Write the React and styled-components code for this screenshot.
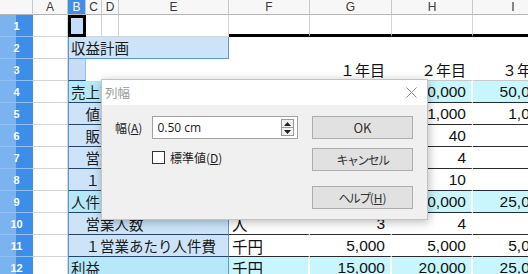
import React from 'react'
import styled, { createGlobalStyle } from 'styled-components'

const GlobalStyle = createGlobalStyle`
  html, body {
    margin: 0;
    padding: 0;
    background: #ffffff;
    overflow: hidden;
  }
`

const JP = `'Noto Sans CJK JP', 'Noto Sans', sans-serif`
const NUM = `'Liberation Sans', 'Noto Sans CJK JP', sans-serif`

const tones = {
  cyan: '#b6e8fa',
  blue: '#cce3f8',
  cyanData: '#c8f6fc',
  white: '#ffffff',
}

const SWrapper = styled.div`
  position: relative;
  width: 528px;
  height: 274px;
  overflow: hidden;
`

const SSheet = styled.div`
  display: grid;
  grid-template-columns: 33px 35px 18px 16px 17px 110px 81px 82px 81px 81px;
  grid-template-rows: 15px repeat(12, 22px);
  width: 554px;
`

const SCorner = styled.div`
  background: #f7f7f7;
  border-right: 1px solid #c8c8c8;
  border-bottom: 1px solid #b5b5b5;
  box-sizing: border-box;
`

const SColHead = styled.div`
  display: flex;
  align-items: center;
  justify-content: center;
  box-sizing: border-box;
  font-family: ${NUM};
  font-size: 12px;
  color: ${({ $active }) => ($active ? '#ffffff' : '#3a3a3a')};
  background: ${({ $active }) => ($active ? '#3f8fe6' : '#f7f7f7')};
  border-right: 1px solid #c8c8c8;
  border-bottom: 1px solid #b5b5b5;
`

const SRowHead = styled.div`
  display: flex;
  align-items: center;
  justify-content: center;
  box-sizing: border-box;
  font-family: ${NUM};
  font-size: 11px;
  font-weight: bold;
  color: #ffffff;
  background: linear-gradient(to right, #7ab3f0 0, #7ab3f0 16px, #3c8ee8 16px, #3c8ee8 100%);
  border-bottom: 1px solid #93c1f2;
`

const SGridCell = styled.div`
  box-sizing: border-box;
  background: #ffffff;
  border-right: 1px solid ${({ $line }) => $line || '#d4d4d4'};
  border-bottom: ${({ $thick, $line }) =>
    $thick ? '3px solid #000000' : `1px solid ${$line || '#d4d4d4'}`};
  ${({ $span }) => ($span ? `grid-column: span ${$span};` : '')}
`

const SCursor = styled.div`
  box-sizing: border-box;
  background: #c5ddf6;
  border: 3px solid #000000;
`

const SLabel = styled.div`
  grid-column: span 4;
  display: flex;
  align-items: center;
  box-sizing: border-box;
  padding-left: 2px;
  white-space: pre;
  overflow: hidden;
  font-family: ${JP};
  font-size: 14.5px;
  color: #1a1a1a;
  background: ${({ $tone }) => tones[$tone]};
  border-left: 1px solid #5f9ad6;
  border-right: 1px solid #5f9ad6;
  border-bottom: 1px solid ${({ $edge }) => $edge || '#24466e'};
`

const SSelectedCell = styled.div`
  box-sizing: border-box;
  background: #c5ddf6;
  border-left: 1px solid #5f9ad6;
  border-right: 1px solid #9cc3ea;
  border-bottom: 1px solid #24466e;
`

const SValue = styled.div`
  display: flex;
  align-items: center;
  justify-content: ${({ $left }) => ($left ? 'flex-start' : 'flex-end')};
  box-sizing: border-box;
  padding: ${({ $left }) => ($left ? '0 0 0 3px' : '0 5px 0 0')};
  font-family: ${({ $left }) => ($left ? JP : NUM)};
  font-size: 15.5px;
  color: #111111;
  white-space: nowrap;
  overflow: hidden;
  background: ${({ $cyan }) => ($cyan ? tones.cyanData : tones.white)};
  border-right: 2px solid #ffffff;
  border-bottom: 1px solid ${({ $soft }) => ($soft ? '#c9c9c9' : '#2a2a2a')};
`

const SYear = styled(SValue)`
  font-family: ${JP};
  font-size: 15px;
`

const SDialog = styled.div`
  position: absolute;
  left: 101px;
  top: 79px;
  width: 327px;
  height: 141px;
  box-sizing: border-box;
  display: flex;
  flex-direction: column;
  background: #f0f0f0;
  border: 1px solid #c4c4c4;
  box-shadow: 1px 2px 9px rgba(0, 0, 0, 0.28);
  font-family: ${JP};
  font-size: 12px;
  color: #1e1e1e;
`

const STitleBar = styled.div`
  height: 25px;
  flex: none;
  display: flex;
  align-items: center;
  justify-content: space-between;
  padding: 0 10px 0 3px;
  background: #ffffff;
`

const STitle = styled.span`
  font-size: 12.5px;
  color: #9a9a9a;
`

const SBody = styled.div`
  flex: 1;
  display: flex;
  gap: 14px;
  padding: 11px 14px 0 13px;
`

const SForm = styled.div`
  flex: 1;
  display: flex;
  flex-direction: column;
  gap: 10px;
`

const SFieldRow = styled.div`
  display: flex;
  align-items: center;
  gap: 10px;
  height: 23px;
`

const SFieldLabel = styled.span`
  white-space: nowrap;
`

const SInput = styled.div`
  flex: 1;
  height: 23px;
  box-sizing: border-box;
  display: flex;
  align-items: center;
  justify-content: space-between;
  padding: 0 3px 0 4px;
  background: #ffffff;
  border: 1px solid #a2a2a2;
  font-family: 'Open Sans', 'Noto Sans', sans-serif;
  font-size: 12px;
`

const SSpin = styled.div`
  width: 13px;
  height: 17px;
  box-sizing: border-box;
  display: flex;
  flex-direction: column;
  border: 1px solid #9a9a9a;
  background: #f2f2f2;
`

const SSpinHalf = styled.div`
  flex: 1;
  display: flex;
  align-items: center;
  justify-content: center;
  & + & {
    border-top: 1px solid #9a9a9a;
  }
`

const SCheckRow = styled.label`
  display: flex;
  align-items: center;
  gap: 5px;
  margin-left: 37px;
`

const SCheckBox = styled.span`
  width: 13px;
  height: 13px;
  box-sizing: border-box;
  border: 1px solid #333333;
  background: #ffffff;
`

const SButtons = styled.div`
  width: 101px;
  display: flex;
  flex-direction: column;
  gap: 9px;
`

const SButton = styled.div`
  height: 23px;
  box-sizing: border-box;
  display: flex;
  align-items: center;
  justify-content: center;
  margin-top: ${({ $gapTop }) => $gapTop || 0}px;
  background: #e1e1e1;
  border: 1px solid #adadad;
  color: #333333;
  font-size: ${({ $latin }) => ($latin ? '13px' : '12px')};
  letter-spacing: ${({ $tight }) => ($tight ? '-1.6px' : '0')};
`

const cols = ['A', 'B', 'C', 'D', 'E', 'F', 'G', 'H', 'I']

const rows = [
  { n: 4, label: '売上高', tone: 'cyan', unit: '千円', vals: ['30,000', '40,000', '50,000'] },
  { n: 5, label: '　値段', tone: 'blue', unit: '千円', vals: ['1,000', '1,000', '1,000'] },
  { n: 6, label: '　販売数', tone: 'blue', unit: '個', vals: ['30', '40', ''] },
  { n: 7, label: '　営業人数', tone: 'blue', unit: '人', vals: ['3', '4', ''] },
  { n: 8, label: '　１営業あたり販売数', tone: 'blue', unit: '個', vals: ['10', '10', ''] },
  { n: 9, label: '人件費', tone: 'cyan', unit: '千円', vals: ['15,000', '20,000', '25,000'] },
  { n: 10, label: '　営業人数', tone: 'blue', unit: '人', vals: ['3', '4', ''] },
  { n: 11, label: '　１営業あたり人件費', tone: 'blue', unit: '千円', vals: ['5,000', '5,000', '5,000'] },
  { n: 12, label: '利益', tone: 'cyan', unit: '千円', vals: ['15,000', '20,000', '25,000'] },
]

const Triangle = ({ up }) => (
  <svg width="7" height="4" viewBox="0 0 7 4">
    <path d={up ? 'M0 4 L3.5 0 L7 4 Z' : 'M0 0 L3.5 4 L7 0 Z'} fill="#222" />
  </svg>
)

const CloseIcon = () => (
  <svg width="11" height="11" viewBox="0 0 11 11">
    <path d="M0.5 0.5 L10.5 10.5 M10.5 0.5 L0.5 10.5" stroke="#8a8a8a" strokeWidth="1" />
  </svg>
)

const ColumnWidthDialog = () => (
  <SDialog>
    <STitleBar>
      <STitle>{'列幅'}</STitle>
      <CloseIcon />
    </STitleBar>
    <SBody>
      <SForm>
        <SFieldRow>
          <SFieldLabel>
            {'幅('}
            <u>{'A'}</u>
            {')'}
          </SFieldLabel>
          <SInput>
            <span>{'0.50 cm'}</span>
            <SSpin>
              <SSpinHalf>
                <Triangle up />
              </SSpinHalf>
              <SSpinHalf>
                <Triangle />
              </SSpinHalf>
            </SSpin>
          </SInput>
        </SFieldRow>
        <SCheckRow>
          <SCheckBox />
          <span>
            {'標準値('}
            <u>{'D'}</u>
            {')'}
          </span>
        </SCheckRow>
      </SForm>
      <SButtons>
        <SButton $latin>{'OK'}</SButton>
        <SButton $tight>{'キャンセル'}</SButton>
        <SButton $tight $gapTop={6}>
          {'ヘルプ'}
          <span style={{ letterSpacing: 0 }}>
            {'('}
            <u>{'H'}</u>
            {')'}
          </span>
        </SButton>
      </SButtons>
    </SBody>
  </SDialog>
)

const App = () => (
  <SWrapper>
    <GlobalStyle />
    <SSheet>
      <SCorner />
      {cols.map((c) => (
        <SColHead key={c} $active={c === 'B'}>
          {c}
        </SColHead>
      ))}

      {/* row 1 */}
      <SRowHead>{'1'}</SRowHead>
      <SGridCell />
      <SCursor />
      <SGridCell />
      <SGridCell />
      <SGridCell />
      <SGridCell $thick />
      <SGridCell $thick />
      <SGridCell $thick />
      <SGridCell $thick />

      {/* row 2 */}
      <SRowHead>{'2'}</SRowHead>
      <SGridCell />
      <SLabel $tone="blue" $edge="#5f9ad6">{'収益計画'}</SLabel>
      <SGridCell $line="#ffffff" $span={4} />

      {/* row 3 */}
      <SRowHead>{'3'}</SRowHead>
      <SGridCell />
      <SSelectedCell />
      <SGridCell $line="#ffffff" $span={3} />
      <SValue $soft />
      <SYear $soft>{'１年目'}</SYear>
      <SYear $soft>{'２年目'}</SYear>
      <SYear $soft>{'３年目'}</SYear>

      {rows.map((r) => (
        <React.Fragment key={r.n}>
          <SRowHead>{r.n}</SRowHead>
          <SGridCell />
          <SLabel $tone={r.tone}>{r.label}</SLabel>
          <SValue $left $cyan={r.tone === 'cyan'}>
            {r.unit}
          </SValue>
          {r.vals.map((v, i) => (
            <SValue key={i} $cyan={r.tone === 'cyan'}>
              {v}
            </SValue>
          ))}
        </React.Fragment>
      ))}
    </SSheet>
    <ColumnWidthDialog />
  </SWrapper>
)

export default App
